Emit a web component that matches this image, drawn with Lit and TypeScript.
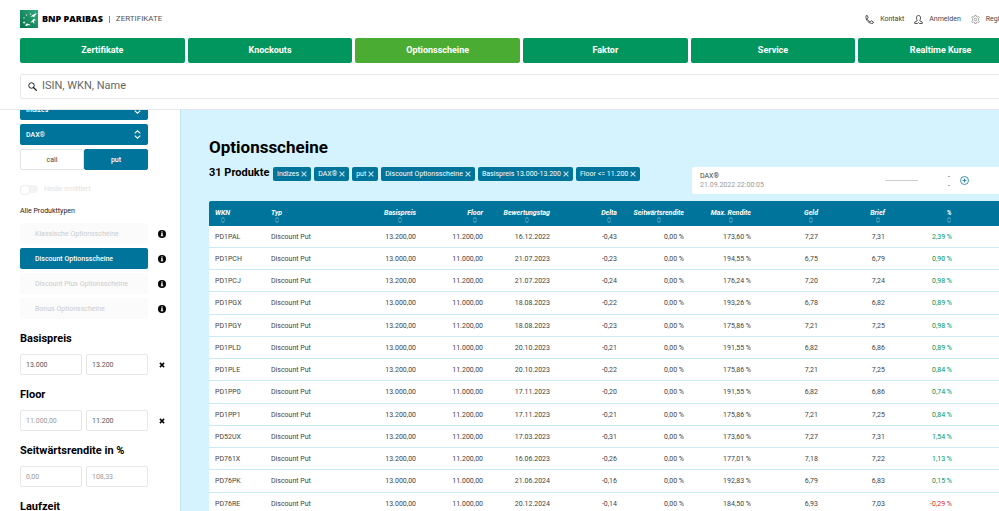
import { LitElement, html, css, svg, nothing } from "lit";
import { customElement, state } from "lit/decorators.js";
import { classMap } from "lit/directives/class-map.js";

const NAV = ["Zertifikate", "Knockouts", "Optionsscheine", "Faktor", "Service", "Realtime Kurse"];

const TYPES = ["Klassische Optionsscheine", "Discount Optionsscheine", "Discount Plus Optionsscheine", "Bonus Optionsscheine"];

const CHIPS = ["Indizes", "DAX®", "put", "Discount Optionsscheine", "Basispreis 13.000-13.200", "Floor <= 11.200"];

const COLUMNS = ["WKN", "Typ", "Basispreis", "Floor", "Bewertungstag", "Delta", "Seitwärtsrendite", "Max. Rendite", "Geld", "Brief", "%"];

interface RangeFilter {
  id: string;
  title: string;
  from: string;
  to: string;
  fromHint: string;
  toHint: string;
  clearable: boolean;
}

const RANGES: RangeFilter[] = [
  { id: "basis", title: "Basispreis", from: "13.000", to: "13.200", fromHint: "", toHint: "", clearable: true },
  { id: "floor", title: "Floor", from: "", to: "11.200", fromHint: "11.000,00", toHint: "", clearable: true },
  { id: "rendite", title: "Seitwärtsrendite in %", from: "", to: "", fromHint: "0,00", toHint: "108,33", clearable: false },
];

// WKN, Basispreis, Floor, Bewertungstag, Delta, Max. Rendite, Geld, Brief, %
const ROWS: string[][] = [
  ["PD1PAL", "13.200,00", "11.200,00", "16.12.2022", "-0,43", "173,60 %", "7,27", "7,31", "2,39 %"],
  ["PD1PCH", "13.000,00", "11.000,00", "21.07.2023", "-0,23", "194,55 %", "6,75", "6,79", "0,90 %"],
  ["PD1PCJ", "13.200,00", "11.200,00", "21.07.2023", "-0,24", "176,24 %", "7,20", "7,24", "0,98 %"],
  ["PD1PGX", "13.000,00", "11.000,00", "18.08.2023", "-0,22", "193,26 %", "6,78", "6,82", "0,89 %"],
  ["PD1PGY", "13.200,00", "11.200,00", "18.08.2023", "-0,23", "175,86 %", "7,21", "7,25", "0,98 %"],
  ["PD1PLD", "13.000,00", "11.000,00", "20.10.2023", "-0,21", "191,55 %", "6,82", "6,86", "0,89 %"],
  ["PD1PLE", "13.200,00", "11.200,00", "20.10.2023", "-0,22", "175,86 %", "7,21", "7,25", "0,84 %"],
  ["PD1PP0", "13.000,00", "11.000,00", "17.11.2023", "-0,20", "191,55 %", "6,82", "6,86", "0,74 %"],
  ["PD1PP1", "13.200,00", "11.200,00", "17.11.2023", "-0,21", "175,86 %", "7,21", "7,25", "0,84 %"],
  ["PD52UX", "13.200,00", "11.200,00", "17.03.2023", "-0,31", "173,60 %", "7,27", "7,31", "1,54 %"],
  ["PD761X", "13.200,00", "11.200,00", "16.06.2023", "-0,26", "177,01 %", "7,18", "7,22", "1,13 %"],
  ["PD76PK", "13.000,00", "11.000,00", "21.06.2024", "-0,16", "192,83 %", "6,79", "6,83", "0,15 %"],
  ["PD76RE", "13.000,00", "11.000,00", "20.12.2024", "-0,14", "184,50 %", "6,93", "7,03", "-0,29 %"],
];

const star = (x: number, y: number, r: number, turn: number) =>
  svg`<path transform="translate(${x} ${y}) rotate(${turn}) scale(${r})" fill="#fff"
    d="M0-1 .26-.3 1-.3.4.14.6.85 0 .42-.6.85-.4.14-1-.3-.26-.3Z"/>`;

const logo = html`<svg class="logo" viewBox="0 0 36 36" aria-hidden="true">
  <defs>
    <linearGradient id="g" x1="0" y1="1" x2="1" y2="0">
      <stop offset="0" stop-color="#00734a" /><stop offset="1" stop-color="#35a97d" />
    </linearGradient>
  </defs>
  <rect width="36" height="36" fill="url(#g)" />
  ${star(8, 25, 3, 10)}${star(8, 16, 2, 0)}${star(13, 10, 2, 20)}${star(21, 8, 2, 0)}
  <path fill="#fff" d="M25 10c3-2 5-2 8-4-1 4-3 6-5 6l3 3-6-2-4 1ZM27 18c3 0 4 1 5 3-2-1-3 0-4 2l1 5-4-4-5 1 4-3ZM13 27l5 1 4 3-5-1-3 2-4-1Z" />
</svg>`;

const phoneIcon = html`<svg class="top-icon" viewBox="0 0 18 18" aria-hidden="true">
  <path fill="none" stroke="#222" stroke-width="1.5" stroke-linejoin="round"
    d="M2 1.500 4.500 1 6.500 5.500 4.500 7C5 10 7.500 12.500 10.500 13.500L12.500 11.500 17 14 16 16.500C10 18.500 0 11 2 1.500ZM4.500 7 3 8M10.500 13.500 9.500 15" />
</svg>`;

const userIcon = html`<svg class="top-icon" viewBox="0 0 18 18" aria-hidden="true">
  <path fill="none" stroke="#222" stroke-width="1.500" stroke-linejoin="round"
    d="M9 1C6 1 5 3 5 6c0 2 .5 3.500 1.500 4.500L6 12 1.500 14v3H7l2-2 2 2h5.500v-3L12 12l-.5-1.500C12.500 9.500 13 8 13 6c0-3-1-5-4-5Z" />
</svg>`;

const gearIcon = html`<svg class="top-icon" viewBox="0 0 18 18" aria-hidden="true">
  <g fill="none" stroke="#555">
    <path stroke-linejoin="round" d="m7.500 1-.5 2-2 1-2-1-1.500 2.500L3 7v4l-1.500 1.500L3 15l2-1 2 1 .5 2h3l.5-2 2-1 2 1 1.500-2.500L15 11V7l1.500-1.500L15 3l-2 1-2-1-.5-2Z" />
    <circle cx="9" cy="9" r="2.500" />
  </g>
</svg>`;

const searchIcon = html`<svg class="search-icon" viewBox="0 0 18 18" aria-hidden="true">
  <circle cx="7" cy="7" r="5.500" fill="none" stroke="#222" stroke-width="2" />
  <path d="m11 11 5.500 5.500" stroke="#222" stroke-width="2.500" stroke-linecap="round" />
</svg>`;

const infoIcon = html`<svg class="info-icon" viewBox="0 0 16 16" aria-hidden="true">
  <circle cx="8" cy="8" r="8" fill="#000" />
  <circle cx="8" cy="4" r="1.500" fill="#fff" />
  <path fill="#fff" d="M6 6.500h3.500v4.500h1v1.500H5.500V11h1V8H6Z" />
</svg>`;

const clearIcon = html`<svg class="clear-icon" viewBox="0 0 10 10" aria-hidden="true">
  <path d="m1.500 1.500 7 7m0-7-7 7" stroke="#000" stroke-width="2.500" />
</svg>`;

const chipX = html`<svg class="chip-x" viewBox="0 0 10 10" aria-hidden="true">
  <path d="m1 1 8 8m0-8-8 8" stroke="#b9dbe8" stroke-width="2" />
</svg>`;

const updown = (cls: string) => html`<svg class=${cls} viewBox="0 0 12 16" aria-hidden="true">
  <path d="m1 6 5-4.500L11 6m0 4-5 4.500L1 10" fill="none" stroke="#fff" stroke-width="2" />
</svg>`;

@customElement("app-root")
export class AppRoot extends LitElement {
  @state() private side = "put";
  @state() private type = "Discount Optionsscheine";

  static styles = css`
    :host {
      display: block;
      height: 100vh;
      overflow: hidden;
      background: #fff;
      color: #444;
      font: 7px/10px Roboto, "Liberation Sans", sans-serif;
    }
    * { box-sizing: border-box; }
    button, input, select { font: inherit; color: inherit; margin: 0; }
    button { cursor: pointer; border: 0; padding: 0; background: none; }
    a { color: inherit; text-decoration: none; }
    h1, h2 { margin: 0; color: #000; font-weight: 700; }
    svg { display: block; flex: none; }

    /* The page is a little wider than the viewport and runs off its right edge. */
    .page { width: calc(100% + 44px); }

    .header {
      position: relative;
      z-index: 1;
      background: #fff;
      height: 110px;
      padding: 0 20px;
      border-bottom: 1px solid #e4e8ea;
    }
    .top { display: flex; align-items: center; height: 38px; }
    .brand { display: flex; align-items: center; gap: 4px; }
    .logo { width: 18px; height: 18px; }
    .brand-name { font: 800 9px/12px "Open Sans", sans-serif; color: #000; }
    .brand-rule { width: 1px; height: 7px; margin: 0 2px; background: #888; }
    .brand-sub { font-size: 8px; color: #555; }
    .links { display: flex; gap: 10px; margin-left: auto; }
    .link { display: flex; align-items: center; gap: 6px; }
    .top-icon { width: 9px; height: 9px; }

    .nav { display: grid; grid-template-columns: repeat(6, 1fr); gap: 3px; }
    .nav-item {
      height: 25px;
      border-radius: 2px;
      background: #00965e;
      color: #fff;
      font-size: 9px;
      font-weight: 700;
      line-height: 24px;
      text-align: center;
    }
    .nav-item.active { background: #4aac33; }

    .search {
      display: flex;
      align-items: center;
      gap: 5px;
      height: 25px;
      margin-top: 11px;
      padding: 0 7px;
      border: 1px solid #e4e8ea;
      border-radius: 2px;
    }
    .search-icon { width: 9px; height: 9px; }
    .search-input { flex: 1; min-width: 0; height: 21px; border: 0; padding: 0 0 2px; outline: 0; background: none; font-size: 11px; }
    .search-input::placeholder { color: #666; opacity: 1; }

    /* Scrolled: the first filter is partly under the header. */
    .body { display: flex; margin-top: -11px; }
    .sidebar { flex: none; width: 180px; padding: 0 18px 0 20px; }
    .stack { display: flex; flex-direction: column; gap: 4px; width: 128px; }
    .select-wrap { position: relative; }
    .select {
      appearance: none;
      display: block;
      width: 100%;
      height: 21px;
      padding: 0 6px;
      border: 0;
      border-radius: 2px;
      background: #00749b;
      color: #fff;
      font-weight: 500;
    }
    .select-arrow { position: absolute; right: 7px; top: 6px; width: 7px; height: 9px; pointer-events: none; }
    .sides { display: grid; grid-template-columns: 1fr 1fr; }
    .side { height: 21px; border: 1px solid #e2e6e8; border-radius: 2px; }
    .side.active { background: #00749b; border-color: #00749b; color: #fff; font-weight: 500; }

    .toggle { display: flex; align-items: center; gap: 6px; height: 10px; margin-top: 14px; color: #e2e2e2; }
    .toggle-input {
      appearance: none;
      display: flex;
      width: 18px;
      height: 8px;
      border-radius: 4px;
      background: #f3f3f3;
    }
    .toggle-input::before { content: ""; width: 8px; height: 8px; border-radius: 4px; background: #fff; border: 1px solid #eee; }

    .group-label { margin: 12px 0 7px; color: #222; }
    .types { display: grid; gap: 4px; }
    .type-row, .range-row { display: grid; grid-template-columns: 128px 8px; gap: 10px; align-items: center; }
    .type {
      height: 21px;
      padding: 0 15px;
      border-radius: 2px;
      background: #fbfbfb;
      color: #ccc;
      text-align: left;
      white-space: nowrap;
    }
    .type.active { background: #00749b; color: #fff; font-weight: 500; }
    .info-icon { width: 8px; height: 8px; }
    .clear-icon { width: 6px; height: 6px; margin: 0 auto; }

    .range-title { margin-top: 14px; font-size: 11px; line-height: 12px; }
    .range-row { margin-top: 9px; }
    .range-inputs { display: grid; grid-template-columns: 1fr 1fr; gap: 4px; }
    .range-input {
      width: 100%;
      height: 21px;
      padding: 0 5px;
      border: 1px solid #e6e6e6;
      border-radius: 2px;
      background: #fff;
      color: #555;
    }
    .range-input::placeholder { color: #999; opacity: 1; }

    .main {
      flex: 1;
      min-width: 0;
      padding: 37px 20px 20px 28px;
      border-left: 1px solid #c4e0ec;
      background: #d5f3fe;
    }
    .title { font-size: 17px; line-height: 22px; }
    .summary { display: flex; align-items: flex-start; margin-top: 9px; }
    .count { font-size: 11px; line-height: 12px; width: 64px; white-space: nowrap; }
    .chips { display: flex; gap: 3px; }
    .chip {
      display: flex;
      align-items: center;
      gap: 2px;
      height: 14px;
      padding: 0 4px;
      border-radius: 2px;
      background: #00749b;
      color: #fff;
      white-space: nowrap;
    }
    .chip-x { width: 6px; height: 6px; }

    .quote {
      display: flex;
      align-items: center;
      width: 331px;
      height: 27px;
      margin-left: auto;
      padding: 0 54px 0 8px;
      border-radius: 2px;
      background: #fff;
      line-height: 9px;
    }
    .quote-time { color: #999; }
    .spark { width: 33px; height: 1px; margin: 0 30px 0 auto; background: #ccc; }
    .dashes { display: grid; gap: 8px; margin-right: 10px; }
    .dash { width: 2px; height: 1px; background: #aaa; }
    .plus-icon { width: 9px; height: 9px; }

    .table { width: 100%; margin-top: 7px; table-layout: fixed; border-collapse: separate; border-spacing: 0; }
    .col-wkn { width: 56px; }
    .col-typ { width: 89px; }
    .col-num { width: 67px; }
    .th, .td { padding: 0 5px; text-align: right; white-space: nowrap; }
    .th { height: 25px; padding-top: 4px; background: #00749b; color: #fff; }
    .th:first-child { border-radius: 2px 0 0 0; }
    .td { height: 22px; background: #fff; border-bottom: 1px solid #cbebf8; }
    .row:nth-child(4n) .td { height: 23px; }
    .th.left, .td.left { text-align: left; padding-left: 6px; }
    .sort { display: inline-grid; justify-items: center; font-weight: 700; font-style: italic; line-height: 8px; vertical-align: middle; }
    .sort-arrow { width: 6px; height: 6px; opacity: 0.6; }
    .up { color: #00965e; }
    .down { color: #e02b20; }
  `;

  private header() {
    return html`<header class="header">
      <div class="top">
        <a class="brand" href="#">
          ${logo}<span class="brand-name">BNP PARIBAS</span><span class="brand-rule"></span><span class="brand-sub">ZERTIFIKATE</span>
        </a>
        <div class="links">
          <a class="link" href="#">${phoneIcon}Kontakt</a>
          <a class="link" href="#">${userIcon}Anmelden</a>
          <a class="link" href="#">${gearIcon}Registrieren</a>
        </div>
      </div>
      <nav class="nav">
        ${NAV.map((n) => html`<a href="#" class=${classMap({ "nav-item": true, active: n === "Optionsscheine" })}>${n}</a>`)}
      </nav>
      <label class="search">
        ${searchIcon}
        <input class="search-input" type="text" placeholder="ISIN, WKN, Name" aria-label="Suche" />
      </label>
    </header>`;
  }

  private select(label: string, value: string) {
    return html`<div class="select-wrap">
      <select class="select" aria-label=${label}><option>${value}</option></select>
      ${updown("select-arrow")}
    </div>`;
  }

  private range(r: RangeFilter) {
    return html`<section>
      <h2 class="range-title" id=${r.id}>${r.title}</h2>
      <div class="range-row">
        <div class="range-inputs" role="group" aria-labelledby=${r.id}>
          <input class="range-input" type="text" aria-label="${r.title} von" .value=${r.from} placeholder=${r.fromHint} />
          <input class="range-input" type="text" aria-label="${r.title} bis" .value=${r.to} placeholder=${r.toHint} />
        </div>
        ${r.clearable ? html`<button aria-label="${r.title} zurücksetzen">${clearIcon}</button>` : nothing}
      </div>
    </section>`;
  }

  private sidebar() {
    return html`<aside class="sidebar">
      <div class="stack">
        ${this.select("Basiswerttyp", "Indizes")}${this.select("Basiswert", "DAX®")}
        <div class="sides">
          ${["call", "put"].map(
            (s) => html`<button class=${classMap({ side: true, active: s === this.side })} @click=${() => (this.side = s)}>${s}</button>`
          )}
        </div>
      </div>
      <label class="toggle"><input class="toggle-input" type="checkbox" disabled />Heute emittiert</label>
      <div class="group-label">Alle Produkttypen</div>
      <div class="types">
        ${TYPES.map(
          (t) => html`<div class="type-row">
            <button class=${classMap({ type: true, active: t === this.type })} @click=${() => (this.type = t)}>${t}</button>
            <button aria-label="Info ${t}">${infoIcon}</button>
          </div>`
        )}
      </div>
      ${RANGES.map((r) => this.range(r))}
      <h2 class="range-title">Laufzeit</h2>
    </aside>`;
  }

  private table() {
    return html`<table class="table">
      <colgroup>
        <col class="col-wkn" /><col class="col-typ" />
        ${COLUMNS.slice(2).map(() => html`<col class="col-num" />`)}
        <col />
      </colgroup>
      <thead>
        <tr>
          ${COLUMNS.map(
            (c, i) => html`<th class=${classMap({ th: true, left: i < 2 })}>
              <button class="sort">${c}${updown("sort-arrow")}</button>
            </th>`
          )}
          <th class="th"></th>
        </tr>
      </thead>
      <tbody>
        ${ROWS.map(([wkn, basis, floor, day, delta, max, bid, ask, change]) => {
          const down = change.startsWith("-");
          return html`<tr class="row">
            <td class="td left">${wkn}</td>
            <td class="td left">Discount Put</td>
            ${[basis, floor, day, delta, "0,00 %", max, bid, ask].map((v) => html`<td class="td">${v}</td>`)}
            <td class=${classMap({ td: true, up: !down, down })}>${change}</td>
            <td class="td"></td>
          </tr>`;
        })}
      </tbody>
    </table>`;
  }

  render() {
    return html`<div class="page">
      ${this.header()}
      <div class="body">
        ${this.sidebar()}
        <main class="main">
          <h1 class="title">Optionsscheine</h1>
          <div class="summary">
            <h2 class="count">31 Produkte</h2>
            <div class="chips">${CHIPS.map((c) => html`<button class="chip">${c}${chipX}</button>`)}</div>
            <div class="quote">
              <div>
                <div>DAX®</div>
                <div class="quote-time">21.09.2022 22:00:05</div>
              </div>
              <div class="spark"></div>
              <div class="dashes"><span class="dash"></span><span class="dash"></span></div>
              <button aria-label="Hinzufügen">
                <svg class="plus-icon" viewBox="0 0 18 18" aria-hidden="true">
                  <circle cx="9" cy="9" r="8" fill="none" stroke="#00749b" stroke-width="1.500" />
                  <path d="M9 5v8M5 9h8" stroke="#00749b" stroke-width="1.500" />
                </svg>
              </button>
            </div>
          </div>
          ${this.table()}
        </main>
      </div>
    </div>`;
  }
}
